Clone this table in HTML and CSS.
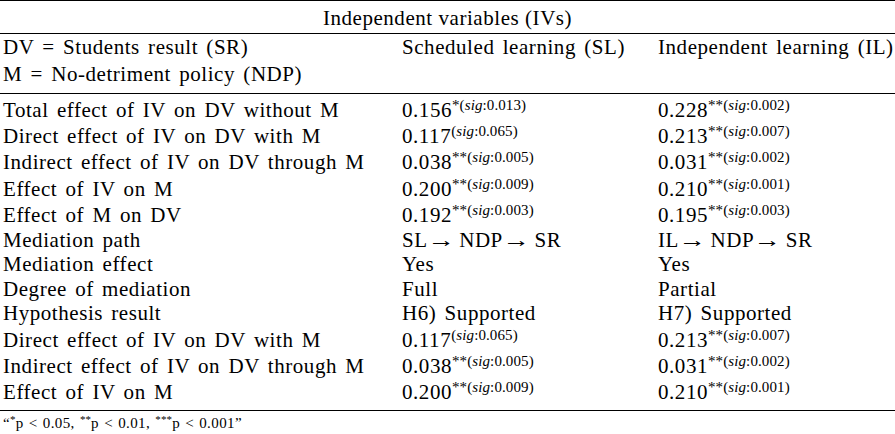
FILE: index.html
```
<!DOCTYPE html>
<html>
<head>
<meta charset="utf-8">
<link rel="stylesheet" href="styles.css">
</head>
<body>
<table class="tbl">
  <colgroup><col class="c1"><col class="c2"><col class="c3"></colgroup>
  <thead>
    <tr class="h1"><th colspan="3">Independent variables (IVs)</th></tr>
    <tr class="h2">
      <th class="lbl">DV = Students result (SR)<br>M = No-detriment policy (NDP)</th>
      <th>Scheduled learning (SL)</th>
      <th>Independent learning (IL)</th>
    </tr>
  </thead>
  <tbody>
    <tr class="s first"><td class="lbl">Total effect of IV on DV without M</td><td>0.156<sup>*(<i>sig</i>:0.013)</sup></td><td>0.228<sup>**(<i>sig</i>:0.002)</sup></td></tr>
    <tr class="s"><td class="lbl">Direct effect of IV on DV with M</td><td>0.117<sup>(<i>sig</i>:0.065)</sup></td><td>0.213<sup>**(<i>sig</i>:0.007)</sup></td></tr>
    <tr class="s"><td class="lbl">Indirect effect of IV on DV through M</td><td>0.038<sup>**(<i>sig</i>:0.005)</sup></td><td>0.031<sup>**(<i>sig</i>:0.002)</sup></td></tr>
    <tr class="s"><td class="lbl">Effect of IV on M</td><td>0.200<sup>**(<i>sig</i>:0.009)</sup></td><td>0.210<sup>**(<i>sig</i>:0.001)</sup></td></tr>
    <tr class="s"><td class="lbl">Effect of M on DV</td><td>0.192<sup>**(<i>sig</i>:0.003)</sup></td><td>0.195<sup>**(<i>sig</i>:0.003)</sup></td></tr>
    <tr><td class="lbl">Mediation path</td><td>SL<span class="ar">→</span>NDP<span class="ar">→</span>SR</td><td>IL<span class="ar">→</span>NDP<span class="ar">→</span>SR</td></tr>
    <tr><td class="lbl">Mediation effect</td><td>Yes</td><td>Yes</td></tr>
    <tr><td class="lbl">Degree of mediation</td><td>Full</td><td>Partial</td></tr>
    <tr><td class="lbl">Hypothesis result</td><td>H6) Supported</td><td>H7) Supported</td></tr>
    <tr class="s"><td class="lbl">Direct effect of IV on DV with M</td><td>0.117<sup>(<i>sig</i>:0.065)</sup></td><td>0.213<sup>**(<i>sig</i>:0.007)</sup></td></tr>
    <tr class="s"><td class="lbl">Indirect effect of IV on DV through M</td><td>0.038<sup>**(<i>sig</i>:0.005)</sup></td><td>0.031<sup>**(<i>sig</i>:0.002)</sup></td></tr>
    <tr class="s last"><td class="lbl">Effect of IV on M</td><td>0.200<sup>**(<i>sig</i>:0.009)</sup></td><td>0.210<sup>**(<i>sig</i>:0.001)</sup></td></tr>
  </tbody>
</table>
<p class="note">“<sup>*</sup>p &lt; 0.05, <sup>**</sup>p &lt; 0.01, <sup>***</sup>p &lt; 0.001”</p>
</body>
</html>
```
FILE: styles.css
```
html, body {
  margin: 0;
  padding: 0;
  background: #ffffff;
}
body {
  font-family: "Liberation Serif", "Times New Roman", serif;
  color: #000000;
  width: 895px;
}
.tbl {
  width: 895px;
  border-collapse: collapse;
  table-layout: fixed;
  font-size: 21px;
  letter-spacing: 0.55px;
  word-spacing: 2.5px;
  border-top: 1px solid #000;
  border-bottom: 1px solid #000;
}
.c1 { width: 402px; }
.c2 { width: 256px; }
.c3 { width: 237px; }
th, td {
  font-weight: normal;
  text-align: left;
  padding: 0;
  vertical-align: top;
  white-space: nowrap;
}
.h1 th {
  text-align: center;
  word-spacing: 0;
  line-height: 24px;
  padding: 4.9px 0 3.1px;
  border-bottom: 1px solid #000;
}
.h2 th {
  line-height: 27px;
  padding: 0.4px 0 4.6px;
  border-bottom: 1px solid #000;
}
td {
  line-height: 24.5px;
}
tr.s td { padding-top: 1.9px; }
tr.first td { padding-top: 3.7px; }
tr.last td { padding-bottom: 5.6px; }
.h2 th.lbl,
td.lbl { padding-left: 3px; }
sup {
  font-size: 15px;
  letter-spacing: 0.1px;
  line-height: 0;
  vertical-align: 7px;
}
sup i { font-style: italic; }
.ar {
  display: inline-block;
  margin: 0 7px 0 3px;
  transform: scaleX(1.3);
}
.note {
  margin: 0;
  padding: 3px 0 0 3px;
  font-size: 15px;
  letter-spacing: 0.4px;
  word-spacing: 1px;
  line-height: 18px;
}
.note sup {
  font-size: 11px;
  vertical-align: 5px;
}
```
